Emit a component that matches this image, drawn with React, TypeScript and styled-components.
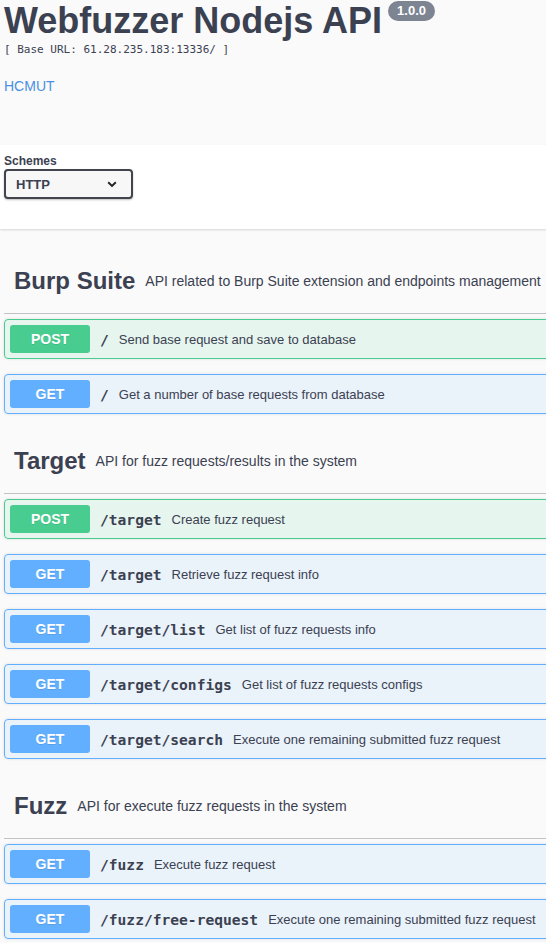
import React from "react";
import styled, { createGlobalStyle, css } from "styled-components";

const GlobalStyle = createGlobalStyle`
  html, body {
    margin: 0;
    padding: 0;
    background: #fafafa;
    overflow: hidden;
  }
  body {
    font-family: "Liberation Sans", Arial, sans-serif;
    color: #3b4151;
  }
`;

const Page = styled.div`
  width: 590px;
  min-height: 943px;
  background: #fafafa;
`;

const Info = styled.header`
  padding: 0 4px 50px 4px;
  display: flex;
  flex-direction: column;
`;

const TitleRow = styled.div`
  display: flex;
  align-items: flex-start;
`;

const Title = styled.h2`
  margin: 0;
  font-size: 36px;
  line-height: 41px;
  font-weight: 700;
  color: #3b4151;
  white-space: nowrap;
`;

const Version = styled.span`
  margin: 1px 0 0 6px;
  height: 20px;
  padding: 0 9px;
  border-radius: 57px;
  background: #7d8492;
  color: #fff;
  font-size: 13px;
  font-weight: 700;
  line-height: 20px;
  display: inline-flex;
  align-items: center;
`;

const BaseUrl = styled.pre`
  margin: 2px 0 0 0;
  font-family: "DejaVu Sans Mono", "Liberation Mono", monospace;
  font-size: 11px;
  line-height: 13px;
  color: #3b4151;
`;

const InfoLink = styled.a`
  margin-top: 22px;
  font-size: 14px;
  line-height: 17px;
  color: #4990e2;
  text-decoration: none;
  align-self: flex-start;
`;

const SchemeContainer = styled.section`
  background: #fff;
  box-shadow: 0 1px 2px 0 rgba(0, 0, 0, 0.15);
  padding: 9px 4px 30px 4px;
  height: 84px;
  box-sizing: border-box;
  display: flex;
  flex-direction: column;
  align-items: flex-start;
`;

const SchemeLabel = styled.label`
  font-size: 12px;
  line-height: 14px;
  font-weight: 700;
  color: #3b4151;
`;

const SchemeSelect = styled.div`
  margin-top: 1px;
  width: 129px;
  height: 30px;
  box-sizing: border-box;
  border: 2px solid #41444e;
  border-radius: 4px;
  background: #f7f7f7;
  box-shadow: 0 1px 2px 0 rgba(0, 0, 0, 0.25);
  padding: 0 14px 0 10px;
  display: flex;
  align-items: center;
  justify-content: space-between;
  font-size: 13px;
  font-weight: 700;
  color: #3b4151;
`;

const Wrapper = styled.main`
  padding: 20px 0 0 4px;
`;

const TagSection = styled.section`
  display: flex;
  flex-direction: column;
`;

const TagHeader = styled.h3`
  margin: 0 0 5px 0;
  height: 64px;
  padding: 0 20px 0 10px;
  border-bottom: 1px solid rgba(59, 65, 81, 0.3);
  display: flex;
  align-items: center;
  white-space: nowrap;
`;

const TagName = styled.span`
  font-size: 24px;
  font-weight: 700;
  color: #3b4151;
`;

const TagDesc = styled.small`
  padding-left: 10px;
  font-size: 14px;
  font-weight: 400;
  color: #3b4151;
`;

type Method = "post" | "get";

const methodColors: Record<Method, { main: string; bg: string }> = {
  post: { main: "#49cc90", bg: "rgba(73, 204, 144, 0.1)" },
  get: { main: "#61affe", bg: "rgba(97, 175, 254, 0.1)" },
};

const OpBlock = styled.div<{ $method: Method }>`
  margin: 0 0 15px 0;
  height: 40px;
  box-sizing: border-box;
  padding: 5px;
  border-radius: 4px;
  display: flex;
  align-items: center;
  white-space: nowrap;
  box-shadow: 0 0 3px rgba(0, 0, 0, 0.12);
  ${({ $method }) => css`
    border: 1px solid ${methodColors[$method].main};
    background: ${methodColors[$method].bg};
  `}
`;

const MethodBadge = styled.span<{ $method: Method }>`
  width: 80px;
  height: 28px;
  flex: none;
  border-radius: 3px;
  background: ${({ $method }) => methodColors[$method].main};
  color: #fff;
  font-size: 14px;
  font-weight: 700;
  display: flex;
  align-items: center;
  justify-content: center;
  text-shadow: 0 1px 0 rgba(0, 0, 0, 0.1);
`;

const Path = styled.span`
  padding: 0 10px;
  font-family: "DejaVu Sans Mono", "Liberation Mono", monospace;
  font-size: 14.6px;
  font-weight: 700;
  color: #3b4151;
`;

const Summary = styled.span`
  font-size: 13px;
  color: #3b4151;
`;

const Chevron = () => (
  <svg width="10" height="7" viewBox="0 0 10 7" aria-hidden="true">
    <path d="M1.2 1.3 L5 5 L8.8 1.3" fill="none" stroke="#222" strokeWidth="1.9" />
  </svg>
);

type Op = { method: Method; path: string; summary: string };
type Tag = { name: string; desc: string; ops: Op[] };

const tags: Tag[] = [
  {
    name: "Burp Suite",
    desc: "API related to Burp Suite extension and endpoints management",
    ops: [
      { method: "post", path: "/", summary: "Send base request and save to database" },
      { method: "get", path: "/", summary: "Get a number of base requests from database" },
    ],
  },
  {
    name: "Target",
    desc: "API for fuzz requests/results in the system",
    ops: [
      { method: "post", path: "/target", summary: "Create fuzz request" },
      { method: "get", path: "/target", summary: "Retrieve fuzz request info" },
      { method: "get", path: "/target/list", summary: "Get list of fuzz requests info" },
      { method: "get", path: "/target/configs", summary: "Get list of fuzz requests configs" },
      { method: "get", path: "/target/search", summary: "Execute one remaining submitted fuzz request" },
    ],
  },
  {
    name: "Fuzz",
    desc: "API for execute fuzz requests in the system",
    ops: [
      { method: "get", path: "/fuzz", summary: "Execute fuzz request" },
      { method: "get", path: "/fuzz/free-request", summary: "Execute one remaining submitted fuzz request" },
    ],
  },
];

export default function App() {
  return (
    <Page>
      <GlobalStyle />
      <Info>
        <TitleRow>
          <Title>Webfuzzer Nodejs API</Title>
          <Version>1.0.0</Version>
        </TitleRow>
        <BaseUrl>[ Base URL: 61.28.235.183:13336/ ]</BaseUrl>
        <InfoLink href="#">HCMUT</InfoLink>
      </Info>
      <SchemeContainer>
        <SchemeLabel>Schemes</SchemeLabel>
        <SchemeSelect>
          <span>HTTP</span>
          <Chevron />
        </SchemeSelect>
      </SchemeContainer>
      <Wrapper>
        {tags.map((tag) => (
          <TagSection key={tag.name}>
            <TagHeader>
              <TagName>{tag.name}</TagName>
              <TagDesc>{tag.desc}</TagDesc>
            </TagHeader>
            {tag.ops.map((op, i) => (
              <OpBlock key={i} $method={op.method}>
                <MethodBadge $method={op.method}>{op.method.toUpperCase()}</MethodBadge>
                <Path>{op.path}</Path>
                <Summary>{op.summary}</Summary>
              </OpBlock>
            ))}
          </TagSection>
        ))}
      </Wrapper>
    </Page>
  );
}
